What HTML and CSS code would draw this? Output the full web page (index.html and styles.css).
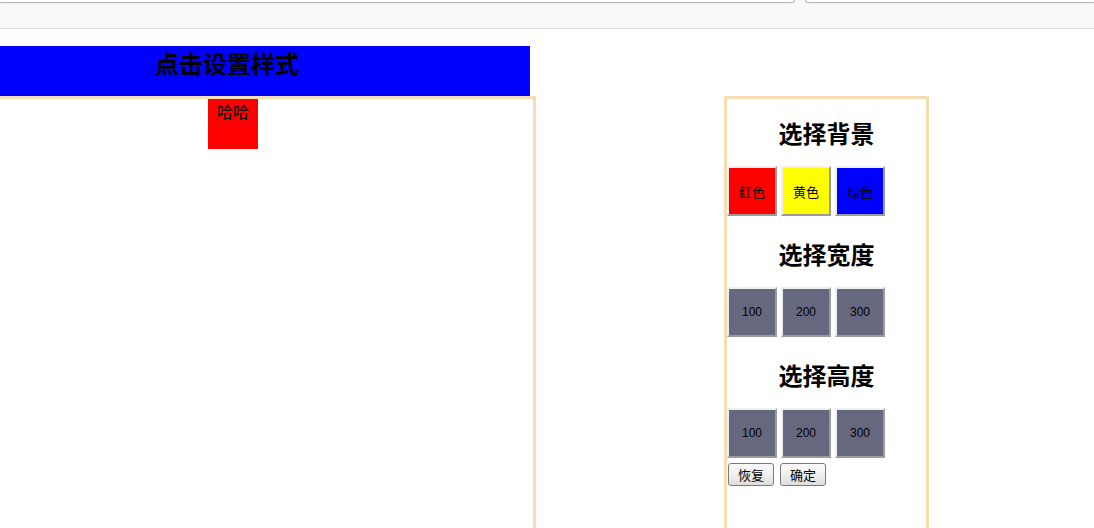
FILE: index.html
```html
<!DOCTYPE html>
<html>
<head>
<meta charset="utf-8">
<link rel="stylesheet" href="styles.css">
</head>
<body>
<div class="topbar">
  <div class="field field-left"></div>
  <div class="field field-right"></div>
</div>
<div class="page">
  <div class="title">点击设置样式</div>
  <div class="main">
    <div class="stage">
      <div class="target">哈哈</div>
    </div>
    <div class="panel">
      <h2 class="heading">选择背景</h2>
      <div class="choices">
        <button class="swatch red">红色</button>
        <button class="swatch yellow">黄色</button>
        <button class="swatch blue">绿色</button>
      </div>
      <h2 class="heading">选择宽度</h2>
      <div class="choices">
        <button class="swatch gray num">100</button>
        <button class="swatch gray num">200</button>
        <button class="swatch gray num">300</button>
      </div>
      <h2 class="heading">选择高度</h2>
      <div class="choices">
        <button class="swatch gray num">100</button>
        <button class="swatch gray num">200</button>
        <button class="swatch gray num">300</button>
      </div>
      <div class="actions">
        <button class="action">恢复</button>
        <button class="action">确定</button>
      </div>
    </div>
  </div>
</div>
</body>
</html>
```

FILE: styles.css
```css
html, body {
  margin: 0;
  padding: 0;
  overflow: hidden;
  background: #ffffff;
  font-family: "Noto Sans CJK SC", "Liberation Sans", sans-serif;
}

.topbar {
  height: 28px;
  background: #f9f9f9;
  border-bottom: 1px solid #dcdcdc;
  display: flex;
  gap: 10px;
  align-items: flex-start;
}

.field {
  height: 2px;
  background: #ffffff;
  border: 1px solid #b9b9b9;
  border-top: none;
  box-shadow: 0 1px 2px rgba(0, 0, 0, 0.06);
}

.field-left {
  width: 794px;
  border-left: none;
  border-radius: 0 0 3px 0;
}

.field-right {
  flex: 1;
  border-right: none;
  border-radius: 0 0 0 3px;
}

.page {
  margin-left: -70px;
  margin-top: 17px;
}

.title {
  width: 600px;
  height: 50px;
  box-sizing: border-box;
  padding-top: 3px;
  padding-right: 6px;
  background: #0000ff;
  color: #000000;
  font-size: 24px;
  font-weight: bold;
  line-height: 28px;
  text-align: center;
}

.main {
  display: flex;
  align-items: flex-start;
}

.stage {
  width: 600px;
  height: 500px;
  border: 3px solid #f5deb3;
}

.target {
  width: 50px;
  height: 50px;
  box-sizing: border-box;
  margin: 0 auto;
  padding-top: 2px;
  background: #ff0000;
  color: #000000;
  font-size: 16px;
  line-height: 20px;
  text-align: center;
}

.panel {
  width: 199px;
  height: 460px;
  margin-left: 188px;
  border: 3px solid #f5deb3;
}

.heading {
  margin: 20px 0 19px;
  font-size: 24px;
  font-weight: bold;
  line-height: 28px;
  text-align: center;
  color: #000000;
}

.choices {
  display: flex;
  gap: 4px;
  height: 50px;
  padding-bottom: 4px;
}

.swatch {
  width: 50px;
  height: 50px;
  box-sizing: border-box;
  margin: 0;
  padding: 0;
  border: 2px solid;
  border-color: #f0f0f0 #9b9b9b #9b9b9b #f0f0f0;
  font-family: "Noto Sans CJK SC", sans-serif;
  font-size: 13px;
  color: #000000;
  text-align: center;
}

.num {
  font-family: "Liberation Sans", sans-serif;
  font-size: 12px;
}

.red { background: #ff0000; }
.yellow { background: #ffff00; }
.blue { background: #0000ff; }
.gray { background: #666880; }

.actions {
  display: flex;
  gap: 6px;
  padding-left: 1px;
  margin-top: 1px;
}

.action {
  width: 46px;
  height: 23px;
  box-sizing: border-box;
  margin: 0;
  padding: 0;
  border: 1px solid #7a7a7a;
  border-radius: 3px;
  background: linear-gradient(#fbfbfb, #f0f0f0 50%, #dcdcdc);
  font-family: "Noto Sans CJK SC", sans-serif;
  font-size: 13px;
  line-height: 19px;
  color: #000000;
}
```
